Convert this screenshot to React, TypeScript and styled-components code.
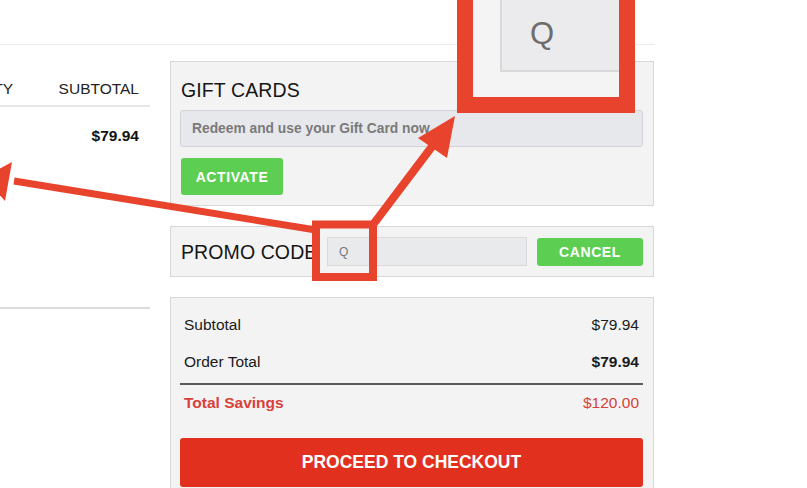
import React from "react";
import styled, { createGlobalStyle } from "styled-components";

const Global = createGlobalStyle`
  html, body { margin: 0; padding: 0; background: #ffffff; }
  body { font-family: "Liberation Sans", Arial, Helvetica, sans-serif; overflow: hidden; }
  * { box-sizing: border-box; }
`;

const Page = styled.div`
  position: relative;
  width: 807px;
  height: 488px;
  overflow: hidden;
  background: #ffffff;
  color: #1a1a1a;
`;

const TopBar = styled.div`
  width: 655px;
  height: 45px;
  border-bottom: 1px solid #ebebeb;
`;

const Content = styled.div`
  display: flex;
  gap: 20px;
  padding-top: 16px;
`;

const CartColumn = styled.div`
  width: 150px;
  flex: none;
  display: flex;
  flex-direction: column;
`;

const CartHeader = styled.div`
  display: flex;
  justify-content: space-between;
  align-items: flex-end;
  height: 46px;
  padding: 0 11px 7px 0;
  border-bottom: 2px solid #e6e6e6;
  font-size: 15.5px;
  line-height: 18px;
  color: #222;
`;

const QtyCell = styled.div`
  width: 13px;
  display: flex;
  justify-content: flex-end;
  white-space: nowrap;
`;

const CartRow = styled.div`
  height: 202px;
  padding: 20px 11px 0 0;
  display: flex;
  justify-content: flex-end;
  border-bottom: 2px solid #dcdcdc;
  font-size: 15.5px;
  line-height: 18px;
  font-weight: 700;
  color: #111;
`;

const Sidebar = styled.div`
  width: 484px;
  flex: none;
  display: flex;
  flex-direction: column;
  gap: 20px;
`;

const Panel = styled.div<{ $pad: string }>`
  background: #f3f3f3;
  border: 1px solid #d7d7d7;
  padding: ${(p) => p.$pad};
`;

const PanelTitle = styled.div`
  font-size: 19.5px;
  line-height: 22px;
  color: #161616;
  letter-spacing: 0.1px;
`;

const GiftTitle = styled(PanelTitle)`
  padding-left: 1px;
`;

const GiftInput = styled.div`
  margin-top: 9px;
  height: 37px;
  border: 1px solid #d2d3d6;
  border-radius: 3px;
  background: #e7e8eb;
  display: flex;
  align-items: center;
  padding-left: 11px;
  font-size: 13.8px;
  font-weight: 700;
  color: #7a7a7a;
`;

const GreenButton = styled.div<{ $w: number; $h: number }>`
  width: ${(p) => p.$w}px;
  height: ${(p) => p.$h}px;
  flex: none;
  background: #5ccf53;
  border-radius: 3px;
  color: #ffffff;
  font-weight: 700;
  font-size: 14px;
  letter-spacing: 0.6px;
  display: flex;
  align-items: center;
  justify-content: center;
`;

const ActivateWrap = styled.div`
  margin-top: 11px;
  padding-left: 1px;
`;

const PromoRow = styled.div`
  display: flex;
  align-items: center;
  gap: 10px;
  height: 49px;
`;

const PromoLabel = styled(PanelTitle)`
  width: 136px;
  flex: none;
  white-space: nowrap;
`;

const PromoInput = styled.div`
  flex: 1;
  height: 29px;
  background: #e9eaec;
  border: 1px solid #dadada;
  display: flex;
  align-items: center;
  padding-left: 11px;
  font-size: 12px;
  color: #777;
`;

const SummaryRow = styled.div<{ $h?: number; $red?: boolean }>`
  display: flex;
  justify-content: space-between;
  height: ${(p) => p.$h ?? 37}px;
  line-height: ${(p) => p.$h ?? 37}px;
  padding: 0 4px;
  font-size: 15.5px;
  color: ${(p) => (p.$red ? "#d8413a" : "#1a1a1a")};
`;

const Strong = styled.span`
  font-weight: 700;
`;

const Divider = styled.div`
  height: 2px;
  background: #5a5a5a;
  margin-top: 3px;
`;

const CheckoutButton = styled.div`
  margin-top: 18px;
  height: 49px;
  border-radius: 3px;
  background: #e2301f;
  color: #ffffff;
  font-weight: 700;
  font-size: 17.5px;
  display: flex;
  align-items: center;
  justify-content: center;
`;

const Overlay = styled.svg`
  position: absolute;
  left: 0;
  top: 0;
  width: 807px;
  height: 488px;
  pointer-events: none;
`;

const Callout = styled.div`
  position: absolute;
  left: 457px;
  top: -20px;
  width: 178px;
  height: 133px;
  border: 16px solid #e8432c;
  background: #f4f4f4;
  display: flex;
  justify-content: flex-end;
`;

const Magnified = styled.div`
  width: 119px;
  height: 76px;
  background: #ebebed;
  border-left: 2px solid #d9d9d9;
  border-bottom: 2px solid #d9d9d9;
  padding: 22px 0 0 28px;
  font-size: 31px;
  line-height: 31px;
  color: #6d6d6d;
`;

const RED = "#e8432c";

export default function App() {
  return (
    <Page>
      <Global />
      <TopBar />
      <Content>
        <CartColumn>
          <CartHeader>
            <QtyCell>QUANTITY</QtyCell>
            <span>SUBTOTAL</span>
          </CartHeader>
          <CartRow>$79.94</CartRow>
        </CartColumn>
        <Sidebar>
          <Panel $pad="17px 10px 10px 9px">
            <GiftTitle>GIFT CARDS</GiftTitle>
            <GiftInput>Redeem and use your Gift Card now</GiftInput>
            <ActivateWrap>
              <GreenButton $w={102} $h={37}>ACTIVATE</GreenButton>
            </ActivateWrap>
          </Panel>
          <Panel $pad="0 10px">
            <PromoRow>
              <PromoLabel>PROMO CODE</PromoLabel>
              <PromoInput>Q</PromoInput>
              <GreenButton $w={106} $h={28}>CANCEL</GreenButton>
            </PromoRow>
          </Panel>
          <Panel $pad="8px 10px 12px 9px">
            <SummaryRow>
              <span>Subtotal</span>
              <span>$79.94</span>
            </SummaryRow>
            <SummaryRow>
              <span>Order Total</span>
              <Strong>$79.94</Strong>
            </SummaryRow>
            <Divider />
            <SummaryRow $h={35} $red>
              <Strong>Total Savings</Strong>
              <span>$120.00</span>
            </SummaryRow>
            <CheckoutButton>PROCEED TO CHECKOUT</CheckoutButton>
          </Panel>
        </Sidebar>
      </Content>

      <Overlay viewBox="0 0 807 488">
        <line x1="316" y1="230" x2="14" y2="181" stroke={RED} strokeWidth="7" />
        <polygon points="-16,177 12,162 5,201" fill={RED} />
        <line x1="372" y1="226" x2="440" y2="136" stroke={RED} strokeWidth="8" />
        <polygon points="455,116 418,138 447,158" fill={RED} />
        <rect x="316" y="224.5" width="57" height="52.5" fill="none" stroke={RED} strokeWidth="8" />
      </Overlay>
      <Callout>
        <Magnified>Q</Magnified>
      </Callout>
    </Page>
  );
}
